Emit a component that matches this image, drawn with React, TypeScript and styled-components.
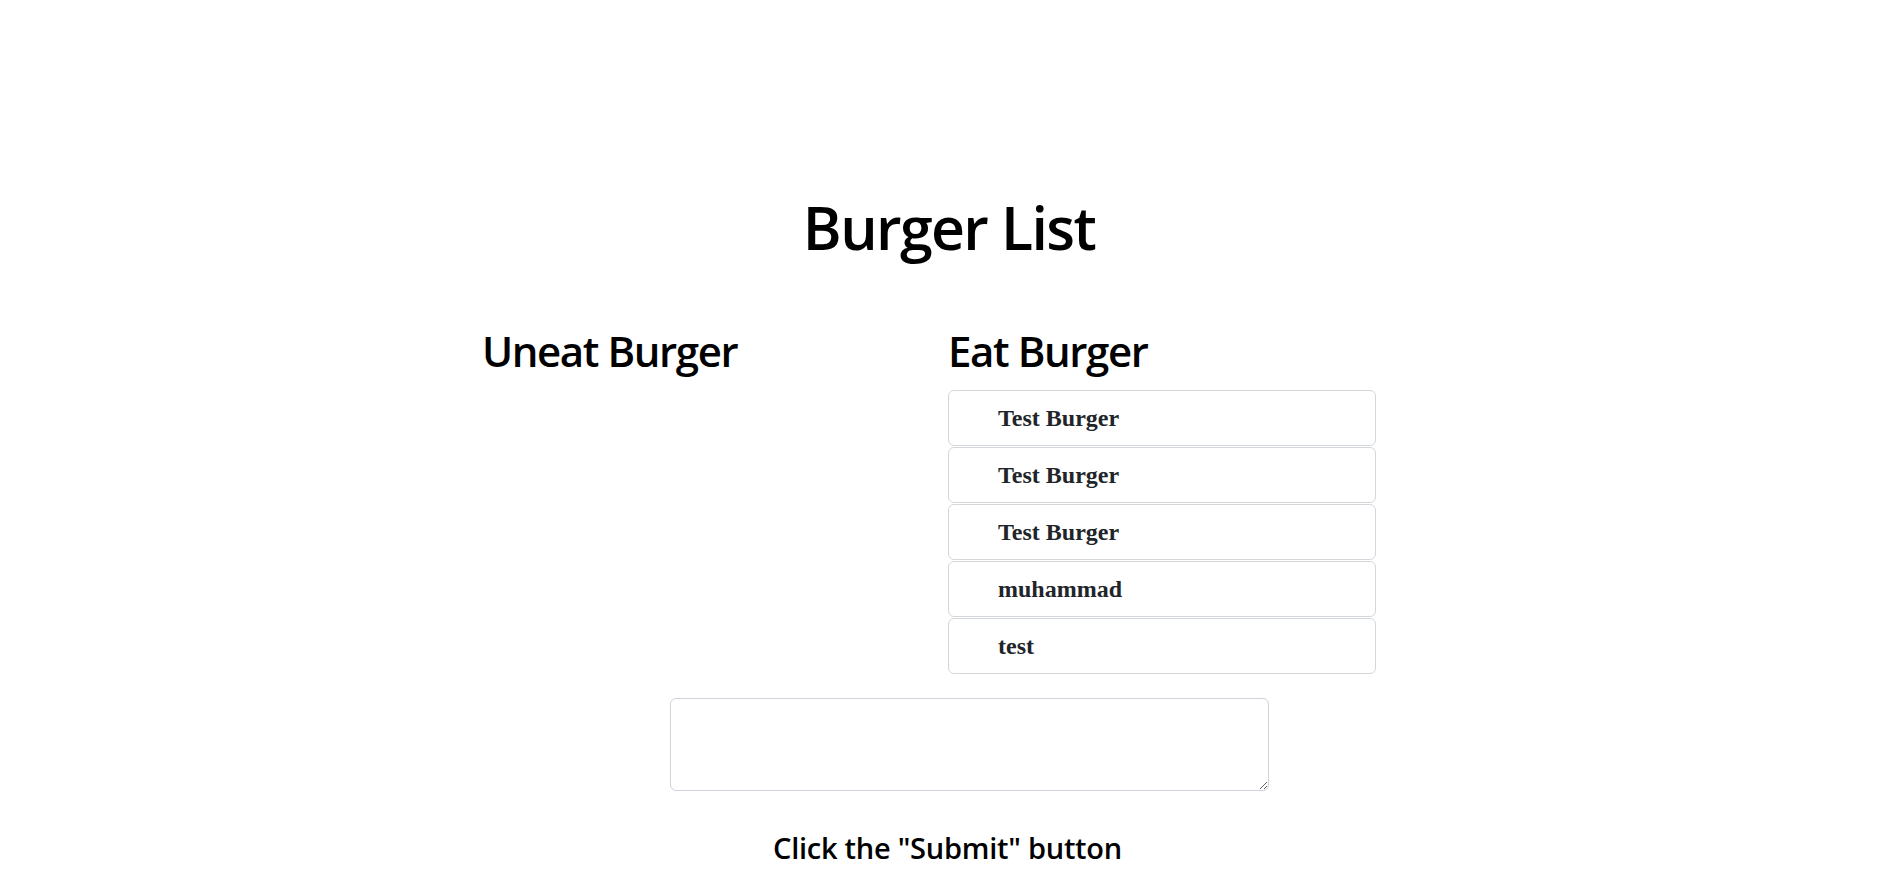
import React from "react";
import styled, { createGlobalStyle } from "styled-components";

const GlobalStyle = createGlobalStyle`
  html, body {
    margin: 0;
    padding: 0;
    background: #ffffff;
  }
  body {
    font-family: "Open Sans", "Noto Sans", sans-serif;
    color: #000000;
  }
`;

const Page = styled.main`
  width: 1881px;
  padding-top: 191px;
  box-sizing: border-box;
`;

const Title = styled.h1`
  margin: 0;
  padding-left: 17px;
  text-align: center;
  font-size: 59px;
  font-weight: 600;
  line-height: 72px;
  letter-spacing: -1.6px;
`;

const Columns = styled.section`
  display: grid;
  grid-template-columns: 428px 428px;
  column-gap: 38px;
  margin: 63px 0 0 482px;
`;

const Column = styled.div`
  display: flex;
  flex-direction: column;
`;

const ColumnHeading = styled.h2`
  margin: 0 0 14px;
  font-size: 42px;
  font-weight: 600;
  line-height: 50px;
  letter-spacing: -1.4px;
`;

const List = styled.ul`
  list-style: none;
  margin: 0;
  padding: 0;
  display: flex;
  flex-direction: column;
  gap: 1px;
`;

const Item = styled.li`
  height: 56px;
  box-sizing: border-box;
  display: flex;
  align-items: center;
  padding-left: 49px;
  border: 1px solid #d3d7dc;
  border-radius: 6px;
  font-family: "Liberation Serif", "Times New Roman", serif;
  font-weight: 700;
  font-size: 24px;
  color: #212529;
`;

const Form = styled.form`
  display: flex;
  flex-direction: column;
  align-items: flex-start;
  margin-top: 24px;
`;

const TextArea = styled.textarea`
  display: block;
  margin-left: 670px;
  width: 599px;
  height: 93px;
  box-sizing: border-box;
  border: 1px solid #ced4da;
  border-radius: 6px;
  background: #fff;
  padding: 9px 18px;
  font-size: 24px;
  font-family: "Open Sans", sans-serif;
  outline: none;
`;

const Hint = styled.p`
  margin: 40px 0 0 773px;
  font-size: 29px;
  font-weight: 600;
  line-height: 34px;
  letter-spacing: -0.25px;
`;

const eaten = ["Test Burger", "Test Burger", "Test Burger", "muhammad", "test"];

export default function App() {
  return (
    <>
      <GlobalStyle />
      <Page>
        <Title>Burger List</Title>
        <Columns>
          <Column>
            <ColumnHeading>Uneat Burger</ColumnHeading>
          </Column>
          <Column>
            <ColumnHeading>Eat Burger</ColumnHeading>
            <List>
              {eaten.map((name, i) => (
                <Item key={i}>{name}</Item>
              ))}
            </List>
          </Column>
        </Columns>
        <Form onSubmit={(e) => e.preventDefault()}>
          <TextArea aria-label="burger name" />
        </Form>
        <Hint>Click the "Submit" button</Hint>
      </Page>
    </>
  );
}
